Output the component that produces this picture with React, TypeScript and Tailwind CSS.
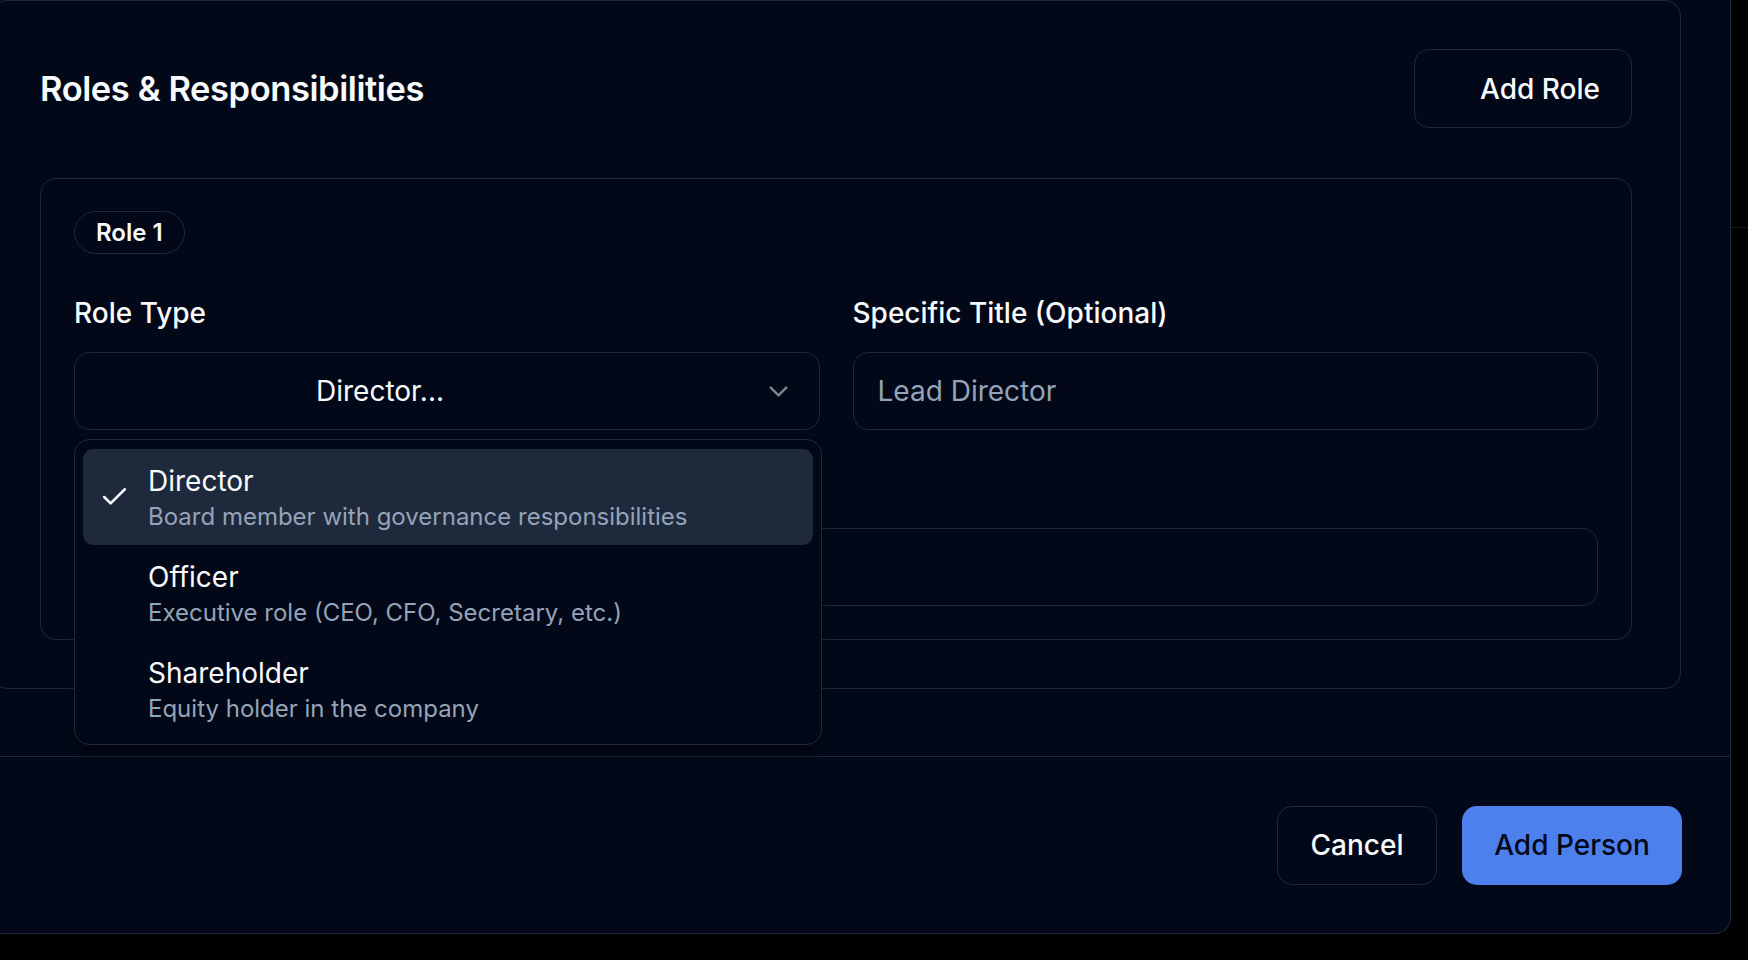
import { Check, ChevronDown } from "lucide-react";
import { PropsWithChildren } from "react";

type RoleOption = {
    label: string;
    description: string;
    selected?: boolean;
}

const roleOptions: RoleOption[] = [
    { label: "Director", description: "Board member with governance responsibilities", selected: true },
    { label: "Officer", description: "Executive role (CEO, CFO, Secretary, etc.)" },
    { label: "Shareholder", description: "Equity holder in the company" },
];

const FieldLabel = ({ children }: PropsWithChildren) => (
    <label className="block h-[28px] text-[28px] leading-[28px] font-medium text-[#f8fafc] whitespace-nowrap">
        {children}
    </label>
)

const RoleMenu = () => (
    <div className="absolute left-0 top-[87px] z-10 w-[748px] rounded-[15px] border border-[#1e293b] bg-[#020817] px-[8px] pt-[9px] pb-[7px] shadow-lg shadow-black/40">
        {roleOptions.map((option) => (
            <div
                key={option.label}
                className={`relative flex flex-col rounded-[10px] py-[12px] pl-[65px] pr-[16px] ${option.selected ? "bg-[#1e293b]" : ""}`}
            >
                {option.selected && (
                    <span className="absolute left-[16px] top-1/2 flex size-[31px] -translate-y-1/2 items-center justify-center text-[#f8fafc]">
                        <Check size={31} />
                    </span>
                )}
                <span className="text-[28px] leading-[40px] text-[#f8fafc]">{option.label}</span>
                <span className="text-[24px] leading-[32px] text-[#94a3b8]">{option.description}</span>
            </div>
        ))}
    </div>
)

const RoleTypeSelect = () => (
    <div className="relative">
        <button className="flex h-[78px] w-full items-center rounded-[15px] border border-[#1e293b] bg-[#020817] pl-[24px] pr-[25px] text-left">
            <span className="flex-1 pl-[217px] text-[28px] text-[#f8fafc]">Director...</span>
            <ChevronDown size={31} className="text-[#f8fafc] opacity-50" />
        </button>
        <RoleMenu />
    </div>
)

const TextField = ({ placeholder }: { placeholder?: string }) => (
    <input
        readOnly
        placeholder={placeholder}
        className="h-[78px] w-full rounded-[15px] border border-[#1e293b] bg-[#020817] px-[24px] text-[28px] text-[#f8fafc] outline-none placeholder:text-[#94a3b8]"
    />
)

const RoleCard = () => (
    <div className="mt-[50px] flex flex-col gap-[45px] rounded-[16px] border border-[#1e293b] px-[33px] pt-[32px] pb-[33px]">
        <div>
            <span className="inline-flex h-[43px] items-center rounded-full border border-[#1e293b] px-[21px] text-[24px] font-semibold text-[#f8fafc]">
                Role 1
            </span>
        </div>
        <div className="grid grid-cols-2 gap-x-[33px] gap-y-[45px]">
            <div className="flex flex-col gap-[25px]">
                <FieldLabel>Role Type</FieldLabel>
                <RoleTypeSelect />
            </div>
            <div className="flex flex-col gap-[25px]">
                <FieldLabel>Specific Title (Optional)</FieldLabel>
                <TextField placeholder="Lead Director" />
            </div>
            {/* label of this row sits under the open menu */}
            <div className="col-span-2 flex flex-col gap-[25px]">
                <div className="h-[28px]" />
                <TextField />
            </div>
        </div>
    </div>
)

const App = () => {
    return (
        <div className="flex h-[960px] w-[1748px] overflow-hidden bg-black font-['Inter',sans-serif]">
            <div className="flex h-[934px] w-[1731px] shrink-0 flex-col rounded-br-[16px] border-r border-b border-[#1e293b] bg-[#020817]">
                <div className="h-[756px] shrink-0">
                    <section className="-ml-[9px] w-[1690px] rounded-[16px] border border-[#1e293b] p-[48px]">
                        <div className="flex h-[79px] items-center justify-between">
                            <h2 className="text-[34.5px] font-semibold tracking-[-0.012em] text-[#f8fafc]">Roles &amp; Responsibilities</h2>
                            <button className="flex h-[79px] w-[218px] items-center rounded-[15px] border border-[#1e293b] pl-[32px] text-[28px] font-medium text-[#f8fafc]">
                                <span className="mr-[33px]" />
                                Add Role
                            </button>
                        </div>
                        <RoleCard />
                    </section>
                </div>
                <footer className="flex flex-1 items-center justify-end gap-[25px] border-t border-[#1e293b] pr-[48px]">
                    <button className="h-[79px] w-[160px] rounded-[15px] border border-[#1e293b] text-[28px] font-medium text-[#f8fafc]">
                        Cancel
                    </button>
                    <button className="h-[79px] w-[220px] rounded-[15px] bg-[#4d80ed] text-[28px] font-medium text-[#020817]">
                        Add Person
                    </button>
                </footer>
            </div>
            <div className="flex-1">
                <div className="mt-[227px] h-px bg-[#161616]" />
            </div>
        </div>
    );
}

export default App;
